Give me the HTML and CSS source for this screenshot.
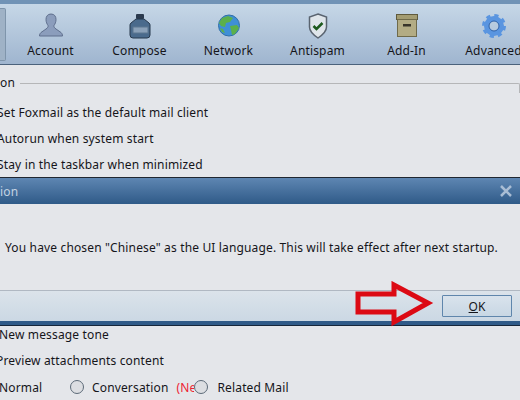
FILE: index.html
```html
<!doctype html>
<html>
<head>
<meta charset="UTF-8">
<title>Options</title>
<link rel="stylesheet" href="styles.css">
</head>
<body>
<div class="top_strip"></div>
<div class="toolbar">
  <div class="tab_selected"></div>
  <div class="tab">
    <svg width="26" height="26" viewBox="0 0 26 26"><path d="M13 1c-3.500 0-5 2.500-5 5.500 0 2.500 1 4.500 2 6 .5 1-.5 2.500-2 3.500l-5 3.500c-1 1-1.500 2-1.500 3.500h23c0-1.500-.5-2.500-1.500-3.500l-5-3.500c-1.500-1-2.500-2.500-2-3.500 1-1.500 2-3.500 2-6C18 3.500 16.500 1 13 1z" fill="#8b9dbc" stroke="#5f6f8d"/></svg>
    <span>Account</span>
  </div>
  <div class="tab">
    <svg width="26" height="26" viewBox="0 0 26 26"><rect x="9" y="1" width="8" height="5" rx="1" fill="#2b3a4e"/><path d="M9 6h8l5 4q1 1 1 2v10q0 3-3 3H6q-3 0-3-3V12q0-1 1-2z" fill="#4a6a8c" stroke="#27384c"/><rect x="6" y="14" width="15" height="6" fill="#8aa0b8" stroke="#5c7690"/></svg>
    <span>Compose</span>
  </div>
  <div class="tab">
    <svg width="26" height="26" viewBox="0 0 26 26"><circle cx="13" cy="12.500" r="10.500" fill="#3f8fd6" stroke="#2f6fa8"/><path d="M6 5l6-2 5 2-3 4-4 1-1 4-4-1-2-3zM14 13l7-1 2 3-4 6-3 1-1-5zM4 15l3 1 2 4-3-1z" fill="#5cb04a"/></svg>
    <span>Network</span>
  </div>
  <div class="tab">
    <svg width="26" height="26" viewBox="0 0 26 26"><path d="M13 1l8.500 3v10c0 5-4 8-8.500 11-4.500-3-8.500-6-8.500-11V4z" fill="#dfe5ea" stroke="#5a6470" stroke-width="1.500"/><path d="M8.500 13l3 3 6-6" fill="none" stroke="#1d5a1d" stroke-width="2.500"/></svg>
    <span>Antispam</span>
  </div>
  <div class="tab">
    <svg width="26" height="26" viewBox="0 0 26 26"><rect x="2.500" y="1.500" width="21" height="5" fill="#a39c72" stroke="#5f5a3d"/><rect x="3.500" y="6.500" width="19" height="17" fill="#b3ac84" stroke="#6f6a4a"/><rect x="9" y="11" width="8" height="2.500" fill="#38352a"/></svg>
    <span>Add-In</span>
  </div>
  <div class="tab">
    <svg width="26" height="26" viewBox="0 0 26 26"><circle cx="13" cy="13" r="7.500" fill="none" stroke="#5a95e0" stroke-width="5"/><circle cx="13" cy="13" r="10" fill="none" stroke="#5a95e0" stroke-width="4" stroke-dasharray="4 3.850"/><circle cx="13" cy="13" r="5" fill="none" stroke="#2f62a8"/></svg>
    <span>Advanced</span>
  </div>
</div>

<div class="options">
  <div class="group_title"><span>on</span><div class="group_line"></div></div>
  <div class="row">Set Foxmail as the default mail client</div>
  <div class="row">Autorun when system start</div>
  <div class="row">Stay in the taskbar when minimized</div>
</div>

<div class="dialog">
  <div class="dialog_title">
    <span>ion</span>
    <svg class="close" width="12" height="12" viewBox="0 0 12 12"><path d="M1 1l10 10M11 1L1 11" stroke="#a9bdd4" stroke-width="2.500"/></svg>
  </div>
  <div class="dialog_body">You have chosen "Chinese" as the UI language. This will take effect after next startup.</div>
  <div class="dialog_foot">
    <button class="ok"><u>O</u>K</button>
  </div>
</div>

<div class="options2">
  <div class="row2">New message tone</div>
  <div class="row2 preview">Preview attachments content</div>
  <div class="row3">
    <span class="normal">Normal</span>
    <span class="radio"></span>
    <span class="conv">Conversation</span>
    <span class="red">(Ne</span>
    <span class="radio radio2"></span>
    <span>Related Mail</span>
  </div>
</div>

<svg class="arrow" width="84" height="48" viewBox="0 0 84 48"><path d="M3 13H39V4L73 22 39 41V31H3z" fill="none" stroke="#dc0a14" stroke-width="5"/></svg>
</body>
</html>
```

FILE: styles.css
```css
html, body {
    height: 100%;
}
body {
    margin: 0;
    width: 520px;
    height: 400px;
    overflow: hidden;
    position: relative;
    background: #e4e6ea;
    color: #15151a;
    font-family: "Noto Sans", sans-serif;
    font-size: 12px;
    letter-spacing: .15px;
}
.top_strip {
    height: 4px;
    background: #7193b6;
}
.toolbar {
    height: 60px;
    display: flex;
    border-bottom: 1px solid #4b627c;
    background: linear-gradient(#c6d7e7, #9fb5cf);
}
.tab_selected {
    width: 5px;
    height: 51px;
    flex: none;
    margin-top: 4px;
    border: 1px solid #7f95ab;
    border-left: 0;
    border-radius: 0 2px 2px 0;
    background: #9fb2c6;
}
.tab {
    width: 89px;
    flex: none;
    display: flex;
    flex-direction: column;
    align-items: center;
    padding-top: 9px;
    gap: 3px;
    white-space: nowrap;
}
.tab:last-child {
    margin-left: -2px;
}
.options {
    height: 112px;
    padding-top: 9px;
    box-sizing: border-box;
}
.group_title {
    display: flex;
    align-items: flex-start;
    gap: 5px;
    height: 18px;
}
.group_title span {
    line-height: 18px;
}
.group_line {
    flex: 1;
    height: 9px;
    margin-top: 9px;
    border-top: 1px solid #b5b6b8;
    border-right: 1px solid #b5b6b8;
    border-top-right-radius: 2px;
}
.row {
    height: 26px;
    line-height: 26px;
    margin-left: -3px;
    white-space: nowrap;
}
.group_title + .row {
    margin-top: 8px;
}
.dialog {
    height: 149px;
    box-sizing: border-box;
    border-top: 1px solid #1f2630;
    display: flex;
    flex-direction: column;
    border-bottom: 1px solid #16263a;
}
.dialog_title {
    height: 26px;
    flex: none;
    display: flex;
    align-items: center;
    justify-content: space-between;
    padding: 0 8px 0 0;
    color: #c3d2e2;
    background: linear-gradient(#5e86b2, #2f5a88);
}
.dialog_body {
    height: 86px;
    flex: none;
    box-sizing: border-box;
    padding: 35px 0 0 5px;
    white-space: nowrap;
}
.dialog_foot {
    flex: 1;
    display: flex;
    justify-content: flex-end;
    align-items: flex-start;
    padding: 4px 8px 0 0;
    border-top: 1px solid #b0b8c2;
    border-bottom: 4px solid #2f5a88;
    background: linear-gradient(#dbe3ea, #cbd8e4);
}
.ok {
    width: 70px;
    height: 22px;
    padding: 0;
    border: 1px solid #5f86ac;
    border-radius: 1px;
    background: linear-gradient(#d9e3ec, #c8d7e4);
    color: #15151a;
    font-family: inherit;
    font-size: 12px;
}
.row2 {
    height: 26px;
    line-height: 26px;
    margin-left: -1px;
    white-space: nowrap;
}
.row2:first-child {
    height: 22px;
    line-height: 18px;
}
.preview {
    margin-left: -4px;
}
.row3 {
    height: 26px;
    margin-left: -1px;
    display: flex;
    align-items: center;
    white-space: nowrap;
}
.normal {
    width: 71px;
}
.radio {
    width: 12px;
    height: 12px;
    flex: none;
    border: 1px solid #5c6a78;
    border-radius: 50%;
    background: #dcdee2;
}
.conv {
    margin-left: 8px;
}
.red {
    margin-left: 8px;
    width: 18px;
    overflow: hidden;
    color: #ee2233;
}
.radio2 {
    margin-right: 9px;
}
.arrow {
    position: absolute;
    left: 355px;
    top: 281px;
}
```
